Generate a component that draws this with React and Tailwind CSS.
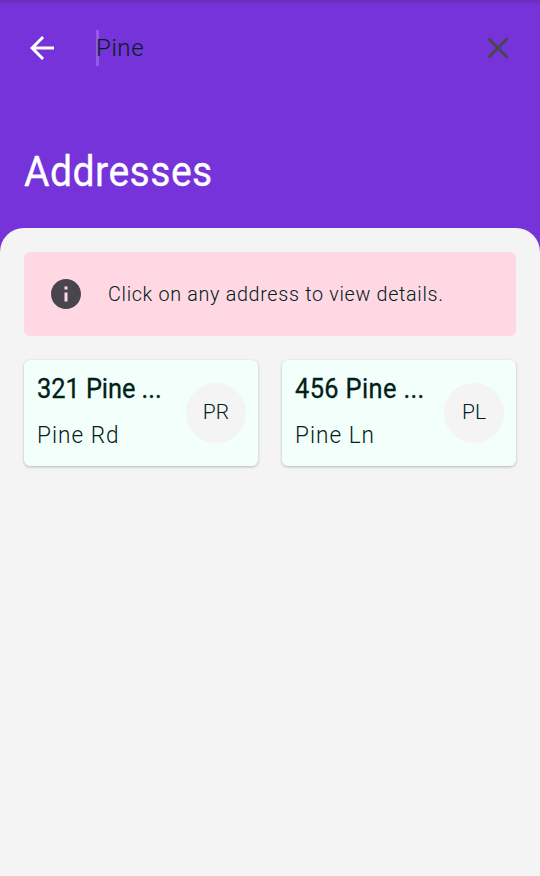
const addresses = [
  { title: '321 Pine ...', street: 'Pine Rd', initials: 'PR', tracking: 'tracking-[-0.05px]' },
  { title: '456 Pine ...', street: 'Pine Ln', initials: 'PL', tracking: 'tracking-[0.4px]' },
];

function AddressCard({ title, street, initials, tracking }) {
  return (
    <div className="flex h-[106px] items-center justify-between rounded-md bg-[#f3fffb] pr-3 pl-[13px] shadow-[0_1px_3px_rgba(0,0,0,0.25)]">
      <div className="flex h-full w-[136px] flex-col whitespace-nowrap pt-[13px]">
        <span className={`origin-left scale-x-[0.94] text-[27px] leading-8 font-normal text-[#00201a] [-webkit-text-stroke:0.3px_#00201a] ${tracking}`}>
          {title}
        </span>
        <span className="mt-[14px] origin-left scale-x-[0.94] text-[24px] leading-8 font-light tracking-[1.1px] text-[#00201a]">{street}</span>
      </div>
      <div className="flex size-[60px] shrink-0 items-center justify-center rounded-full bg-[#f4f4f4] text-[21px] font-light text-[#00201a]">
        {initials}
      </div>
    </div>
  );
}

export default function App() {
  return (
    <div className="flex h-[876px] w-[540px] flex-col overflow-hidden bg-[#7533d9] font-['Roboto',sans-serif]">
      <header className="h-[228px] shrink-0 bg-[linear-gradient(#692db9,#7533d9_5px)]">
        <div className="flex h-24 items-center pr-6 pl-6">
          <svg className="size-9" viewBox="0 0 24 24" fill="#fff">
            <path d="M20 11H7.83l5.59-5.59L12 4l-8 8 8 8 1.41-1.41L7.83 13H20v-2z" />
          </svg>
          <div className="ml-9 h-9 w-[3px] bg-[#915ce1]" />
          <span className="-ml-[3px] flex-1 text-[24px] leading-8 font-light tracking-[0.6px] text-[#00201a]">Pine</span>
          <svg className="size-9" viewBox="0 0 24 24" fill="#49454f">
            <path d="M19 6.41 17.59 5 12 10.59 6.41 5 5 6.41 10.59 12 5 17.59 6.41 19 12 13.41 17.59 19 19 17.59 13.41 12z" />
          </svg>
        </div>
        <h1 className="mt-[49px] ml-6 origin-left scale-x-[0.91] text-[43px] leading-[52px] font-normal tracking-[0.5px] text-white [-webkit-text-stroke:0.3px_#fff]">Addresses</h1>
      </header>
      <main className="flex-1 rounded-t-[24px] bg-[#f4f4f4] p-6">
        <div className="flex h-[84px] items-center rounded-md bg-[#ffd8e3] pl-6">
          <svg className="size-9" viewBox="0 0 24 24" fill="#49454f">
            <path d="M12 2C6.48 2 2 6.48 2 12s4.48 10 10 10 10-4.48 10-10S17.52 2 12 2zm1 15h-2v-6h2v6zm0-8h-2V7h2v2z" />
          </svg>
          <span className="ml-6 origin-left scale-x-[0.94] text-[21px] leading-8 font-light tracking-[0.73px] whitespace-nowrap text-[#00201a]">
            Click on any address to view details.
          </span>
        </div>
        <div className="mt-6 grid grid-cols-2 gap-6">
          {addresses.map((a) => (
            <AddressCard key={a.title} {...a} />
          ))}
        </div>
      </main>
    </div>
  );
}
